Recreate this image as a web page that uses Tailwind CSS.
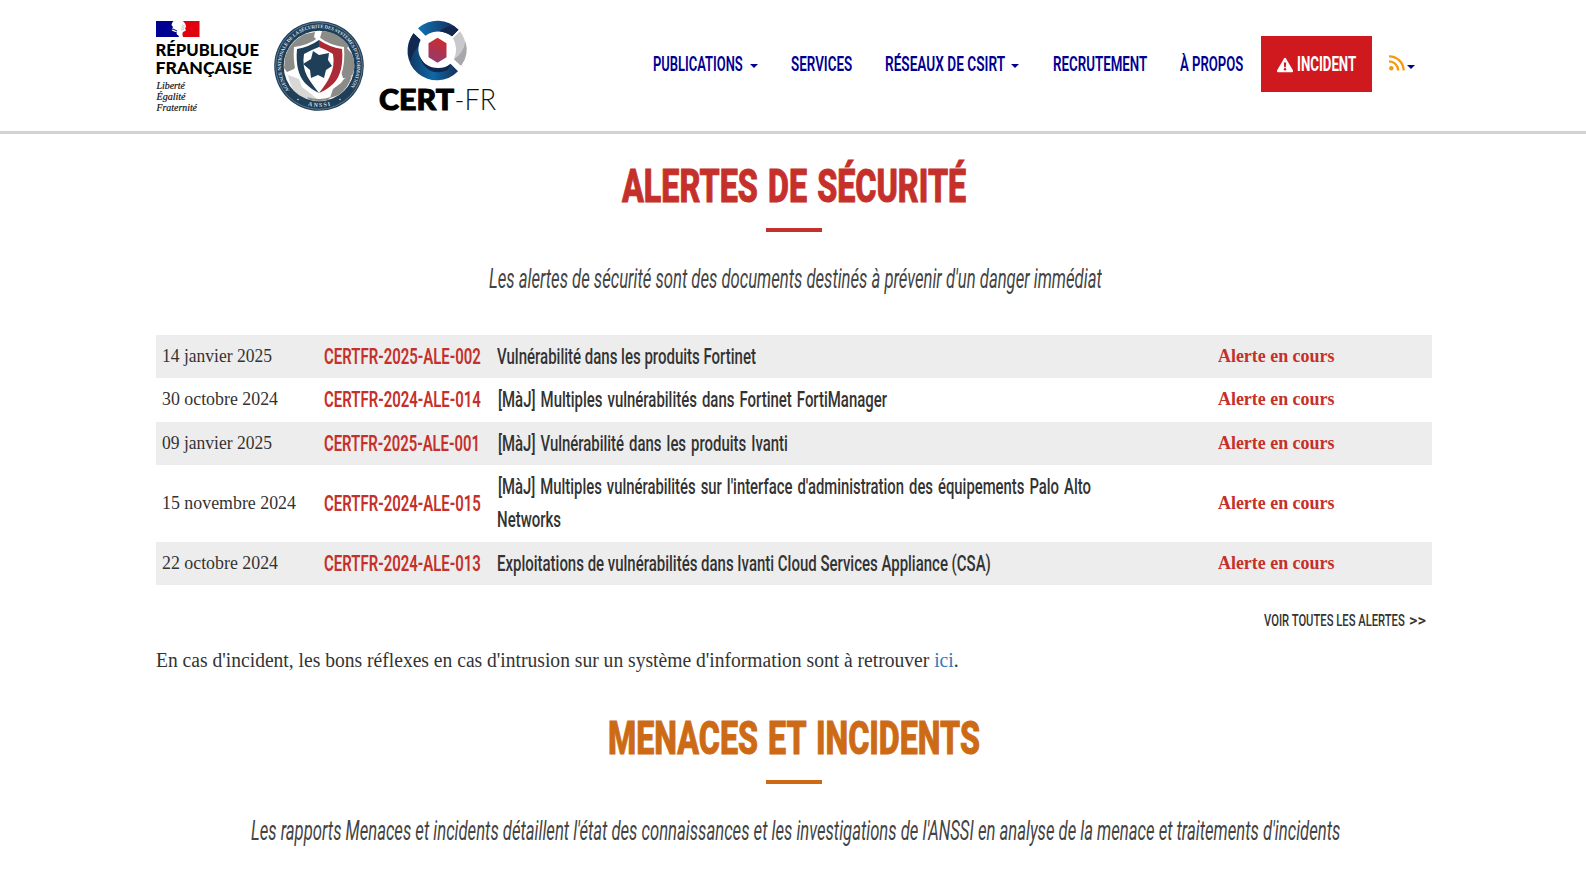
<!DOCTYPE html>
<html lang="fr">
<head>
<meta charset="utf-8">
<title>CERT-FR</title>
<script src="https://cdn.jsdelivr.net/npm/@tailwindcss/browser@4"></script>
</head>
<body class="h-[880px] overflow-hidden bg-white font-['Roboto','Liberation_Sans',sans-serif] text-[#333]">
<header class="flex h-[134px] items-start border-b-[3px] border-[#d2d2d2] pl-[156px]">
  <svg class="mt-5 h-[94px] w-[106px] shrink-0 overflow-visible" viewBox="156 20 106 94" aria-label="République Française">
    <path fill="#000091" d="M156 21h17.500q-2 2-2 4l1.500 2-1.500 3 1 1 3 1 3 5H156z"/>
    <path fill="#e1000f" d="M199.500 21v16H183q-1.500-3 0-5l2-1 1-1-1-1.500 1-1.500q-.5-4-3-6z"/>
    <path fill="none" stroke="#000091" stroke-width="1" d="M168 31.500l5-2.500 4 2M166 34l6-2 5 1M170 36l5-2 4 2.500"/>
    <path fill="#ddd" d="M182 24l3 2-1 4-3 1z"/>
    <g font-family="Lato" font-weight="900" font-size="16" fill="#000">
      <text x="155.500" y="55.800" textLength="103.500" lengthAdjust="spacingAndGlyphs">RÉPUBLIQUE</text>
      <text x="155.500" y="73.700" textLength="96.500" lengthAdjust="spacingAndGlyphs">FRANÇAISE</text>
    </g>
    <g font-family="Liberation Serif" font-style="italic" font-size="10.500" fill="#111" stroke="#111" stroke-width=".2">
      <text x="156.500" y="89" textLength="28.500" lengthAdjust="spacingAndGlyphs">Liberté</text>
      <text x="156.500" y="100" textLength="29" lengthAdjust="spacingAndGlyphs">Égalité</text>
      <text x="156.500" y="111" textLength="40.500" lengthAdjust="spacingAndGlyphs">Fraternité</text>
    </g>
  </svg>
  <svg class="ml-[11px] mt-5 h-[92px] w-[92px] shrink-0 overflow-visible" viewBox="-46 -46 92 92" aria-label="ANSSI">
    <circle r="44.800" fill="#1f3f58"/><circle r="43.300" fill="none" stroke="#9fb0bc" stroke-width=".5"/>
    <circle r="35.300" fill="#fff"/>
    <g fill="#8b8b87">
      <path d="M-34-8Q-30-24-14-32L-4-34-5-29-1-25-9-23-12-16-20-9-22-2-25 3-32 6-35 2z"/>
      <path d="M3-35Q20-34 30-20L28-18 33-12Q37-2 34 8L29 13 24 12 20 0 16-12 10-19 4-22 1-28z"/>
      <path d="M25 13l8-3q-4 12-13 19L11 32l3-9 8-6z"/>
      <path d="M-31 9l11 4 3 8 8 6 7 6Q-14 35-24 26q-5-6-7-17z" opacity=".35"/>
      <path d="M-12 31q12 4 24 0l-3 3q-9 2-18 0z"/>
    </g>
    <path fill="#fff" d="M0-29Q-10-21-25-19-27 8-15 20-8 28 0 31 8 28 15 20 27 8 25-19 10-21 0-29z"/>
    <path fill="#1f3f58" d="M0-26Q-10-19-22-17-24 6-14 17-7 24 0 27-8 17-12 10-17 0-15-12-8-16 0-19z"/>
    <path fill="#ab2a36" d="M0-26Q10-19 23-17 25 6 15 17 8 24 0 27 8 17 11 10 16 0 14-12 8-16 0-19z"/>
    <path fill="#1f3f58" d="M-6-15L0-11 10-13 9-6 13 0 7 4 5 12-1 9-8 12-9 4-16-2-8-7z"/>
    <path id="seal-top" d="M-28.800 24.800A38 38 0 1 1 28.800 24.800" fill="none"/>
    <path id="seal-low" d="M-14 38.500A41 41 0 0 0 14 38.500" fill="none"/>
    <g font-family="Liberation Serif" font-weight="700" fill="#d5dde2">
      <text font-size="5"><textPath href="#seal-top" textLength="167" startOffset="1">AGENCE NATIONALE DE LA SÉCURITÉ DES SYSTÈMES D'INFORMATION</textPath></text>
      <text font-size="6"><textPath href="#seal-low" textLength="23" startOffset="3">ANSSI</textPath></text>
    </g>
    <circle cx="-21" cy="33.500" r=".7" fill="#fff"/><circle cx="21" cy="33.500" r=".7" fill="#fff"/>
  </svg>
  <svg class="ml-3 mt-5 h-[94px] w-[123px] shrink-0 overflow-visible" viewBox="377 20 123 94" aria-label="CERT-FR">
    <defs>
      <linearGradient id="arc-up"><stop offset="0" stop-color="#1272b4"/><stop offset="1" stop-color="#12284f"/></linearGradient>
      <linearGradient id="arc-down"><stop offset="0" stop-color="#12355f"/><stop offset=".5" stop-color="#0f68a5"/><stop offset="1" stop-color="#17305a"/></linearGradient>
      <linearGradient id="core" x1=".6" y1="0" x2=".3" y2="1"><stop offset="0" stop-color="#cd2b2d"/><stop offset="1" stop-color="#903c72"/></linearGradient>
    </defs>
    <g transform="translate(437.500 50.200)">
      <path fill="url(#arc-up)" d="M-19.500-22A29.300 29.300 0 0 1 21-20.500L14.500-14Q1-23-12-14.500z"/>
      <path fill="#12284f" d="M2-19Q13-27 19-22L21-20.500 14.500-14Q9-18 2-19z"/>
      <path fill="#c9c9cb" d="M22.500-19A29.300 29.300 0 0 1 23.500 15.500L16.500 9Q21-2 15.500-12z"/>
      <path fill="#a7a8ab" d="M28-9Q32 5 23.500 15.500L16.500 9Q26 3 28-9z"/>
      <path fill="url(#arc-down)" d="M-24-17A29.300 29.300 0 0 0 20.500 21L13 13.500Q1 23-12 14.500-23 3-17-10z"/>
      <path fill="#12284f" d="M-24-17A29.300 29.300 0 0 0-27 11Q-24 0-19.500-3-19-8-17-10.500z"/>
      <path fill="#12284f" d="M-19 4Q-11 28 10 20L13.500 14 8 17Q-12 21-19 4z"/>
      <path fill="url(#core)" d="M0-12.500L9-7V7L0 12.500-9 7V-7z"/>
    </g>
    <text x="379" y="110.400" font-family="Lato" font-weight="900" font-size="28.500" fill="#000" textLength="75" lengthAdjust="spacingAndGlyphs" stroke="#000" stroke-width="1">CERT</text>
    <text x="454.500" y="110.400" font-family="Lato" font-weight="300" font-size="28.500" fill="#111" textLength="41.500" lengthAdjust="spacingAndGlyphs">-FR</text>
  </svg>
  <nav class="ml-[153px] mt-9 flex h-[56px] items-center text-[20px] font-semibold leading-6 text-[#000091]">
    <a class="w-[90px]"><span class="fit inline-block origin-left whitespace-nowrap">PUBLICATIONS</span></a>
    <i class="ml-[7px] mt-[3px] border-x-4 border-t-4 border-x-transparent border-t-[#000091]"></i>
    <a class="ml-[33px] w-[61px]"><span class="fit inline-block origin-left whitespace-nowrap">SERVICES</span></a>
    <a class="ml-[33px] w-[120px]"><span class="fit inline-block origin-left whitespace-nowrap">RÉSEAUX DE CSIRT</span></a>
    <i class="ml-[6px] mt-[3px] border-x-4 border-t-4 border-x-transparent border-t-[#000091]"></i>
    <a class="ml-[34px] w-[94px]"><span class="fit inline-block origin-left whitespace-nowrap">RECRUTEMENT</span></a>
    <a class="ml-[33px] w-[63px]"><span class="fit inline-block origin-left whitespace-nowrap">À PROPOS</span></a>
    <a class="ml-[18px] flex h-[56px] w-[111px] items-center bg-[#d0191f] pl-4 text-white">
      <svg class="mt-px h-4 w-4" viewBox="0 0 16 16"><path fill="#fff" d="M7 1.600q1-1.600 2 0l7 12q.6 1.600-1 1.600H1q-1.600 0-1-1.600z"/><path fill="#d0191f" d="M6.800 5.500h2.400L8.800 10.300H7.200z"/><circle cx="8" cy="12.300" r="1.200" fill="#d0191f"/></svg>
      <span class="ml-1 w-[59px]"><span class="fit inline-block origin-left whitespace-nowrap font-bold">INCIDENT</span></span>
    </a>
    <svg class="-mt-[3px] ml-[17px] h-4 w-4" viewBox="0 0 16 16" fill="none" stroke="#f7990c" stroke-width="2.300"><circle cx="2.300" cy="13.300" r="2.200" fill="#f7990c" stroke="none"/><path d="M0 6.300a9.200 9.200 0 0 1 9.200 9.200M0 1.300a14.500 14.500 0 0 1 14.700 14.200"/></svg>
    <i class="ml-[2px] mt-[5px] border-x-4 border-t-4 border-x-transparent border-t-[#000091]"></i>
  </nav>
</header>
<main class="flex flex-col overflow-x-clip pl-[156px] pr-[154px] pt-[27px]">
  <h2 class="w-[344px] self-center text-[46px] font-extrabold leading-[50px] text-[#c5302b] [word-spacing:3px] [-webkit-text-stroke:1px]"><span class="fit inline-block origin-left whitespace-nowrap">ALERTES DE SÉCURITÉ</span></h2>
  <div class="mt-[17px] h-1 w-14 self-center bg-[#c5302b]"></div>
  <p class="ml-[333px] mt-[33px] w-[613px] text-[27px] italic leading-[29px] text-[#444]"><span class="fit inline-block origin-left whitespace-nowrap">Les alertes de sécurité sont des documents destinés à prévenir d'un danger immédiat</span></p>

  <section class="mt-[41px] text-[22px] font-medium leading-[32.500px]">
    <div class="flex h-[43px] items-center bg-[#ededed] pl-[6px]">
      <div class="w-[162px] pb-px font-['Liberation_Serif',serif] text-[18px] font-normal"><span class="block w-[110px]"><span class="fit inline-block origin-left whitespace-nowrap">14 janvier 2025</span></span></div>
      <div class="w-[173px] pt-px font-semibold text-[#c5302b]"><span class="block w-[157px]"><span class="fit inline-block origin-left whitespace-nowrap">CERTFR-2025-ALE-002</span></span></div>
      <div class="w-[721px] pt-px"><span class="block w-[259px]"><span class="fit inline-block origin-left whitespace-nowrap">Vulnérabilité dans les produits Fortinet</span></span></div>
      <div class="w-[116px] pb-px font-['Liberation_Serif',serif] text-[19px] font-bold text-[#c5302b]"><span class="fit inline-block origin-left whitespace-nowrap">Alerte en cours</span></div>
    </div>
    <div class="flex h-11 items-center pl-[6px]">
      <div class="w-[162px] pb-px font-['Liberation_Serif',serif] text-[18px] font-normal"><span class="block w-[116px]"><span class="fit inline-block origin-left whitespace-nowrap">30 octobre 2024</span></span></div>
      <div class="w-[173px] font-semibold text-[#c5302b]"><span class="block w-[157px]"><span class="fit inline-block origin-left whitespace-nowrap">CERTFR-2024-ALE-014</span></span></div>
      <div class="w-[721px] [word-spacing:2px]"><span class="ml-px block w-[389px]"><span class="fit inline-block origin-left whitespace-nowrap">[MàJ] Multiples vulnérabilités dans Fortinet FortiManager</span></span></div>
      <div class="w-[116px] pb-px font-['Liberation_Serif',serif] text-[19px] font-bold text-[#c5302b]"><span class="fit inline-block origin-left whitespace-nowrap">Alerte en cours</span></div>
    </div>
    <div class="flex h-[43px] items-center bg-[#ededed] pl-[6px]">
      <div class="w-[162px] pb-px font-['Liberation_Serif',serif] text-[18px] font-normal"><span class="block w-[110px]"><span class="fit inline-block origin-left whitespace-nowrap">09 janvier 2025</span></span></div>
      <div class="w-[173px] pt-px font-semibold text-[#c5302b]"><span class="block w-[156px]"><span class="fit inline-block origin-left whitespace-nowrap">CERTFR-2025-ALE-001</span></span></div>
      <div class="w-[721px] pt-px [word-spacing:2px]"><span class="ml-px block w-[290px]"><span class="fit inline-block origin-left whitespace-nowrap">[MàJ] Vulnérabilité dans les produits Ivanti</span></span></div>
      <div class="w-[116px] pb-px font-['Liberation_Serif',serif] text-[19px] font-bold text-[#c5302b]"><span class="fit inline-block origin-left whitespace-nowrap">Alerte en cours</span></div>
    </div>
    <div class="flex h-[77px] items-center pl-[6px]">
      <div class="w-[162px] pb-px font-['Liberation_Serif',serif] text-[18px] font-normal"><span class="block w-[134px]"><span class="fit inline-block origin-left whitespace-nowrap">15 novembre 2024</span></span></div>
      <div class="w-[173px] pt-px font-semibold text-[#c5302b]"><span class="block w-[157px]"><span class="fit inline-block origin-left whitespace-nowrap">CERTFR-2024-ALE-015</span></span></div>
      <div class="w-[721px] [word-spacing:2px]"><span class="ml-px block w-[593px]"><span class="fit inline-block origin-left whitespace-nowrap">[MàJ] Multiples vulnérabilités sur l'interface d'administration des équipements Palo Alto</span></span><span class="block w-[64px]"><span class="fit inline-block origin-left whitespace-nowrap">Networks</span></span></div>
      <div class="w-[116px] pb-px font-['Liberation_Serif',serif] text-[19px] font-bold text-[#c5302b]"><span class="fit inline-block origin-left whitespace-nowrap">Alerte en cours</span></div>
    </div>
    <div class="flex h-[43px] items-center bg-[#ededed] pl-[6px]">
      <div class="w-[162px] pb-px font-['Liberation_Serif',serif] text-[18px] font-normal"><span class="block w-[116px]"><span class="fit inline-block origin-left whitespace-nowrap">22 octobre 2024</span></span></div>
      <div class="w-[173px] pt-px font-semibold text-[#c5302b]"><span class="block w-[157px]"><span class="fit inline-block origin-left whitespace-nowrap">CERTFR-2024-ALE-013</span></span></div>
      <div class="w-[721px] pt-px"><span class="block w-[494px]"><span class="fit inline-block origin-left whitespace-nowrap">Exploitations de vulnérabilités dans Ivanti Cloud Services Appliance (CSA)</span></span></div>
      <div class="w-[116px] pb-px font-['Liberation_Serif',serif] text-[19px] font-bold text-[#c5302b]"><span class="fit inline-block origin-left whitespace-nowrap">Alerte en cours</span></div>
    </div>
  </section>

  <a class="mr-[6px] mt-[23px] flex w-[162px] self-end text-[17.300px] font-medium leading-6"><span class="w-[141px]"><span class="fit inline-block origin-left whitespace-nowrap">VOIR TOUTES LES ALERTES</span></span><span class="ml-1 w-[17px]"><span class="fit inline-block origin-left whitespace-nowrap">&gt;&gt;</span></span></a>
  <p class="mt-[14px] w-[803px] font-['Liberation_Serif',serif] text-[20px] leading-7"><span class="fit inline-block origin-left whitespace-nowrap">En cas d'incident, les bons réflexes en cas d'intrusion sur un système d'information sont à retrouver <a class="text-[#337ab7]">ici</a>.</span></p>

  <h2 class="mt-[39px] w-[372px] self-center text-[46px] font-extrabold leading-[50px] text-[#cc6a16] [word-spacing:3px] [-webkit-text-stroke:1px]"><span class="fit inline-block origin-left whitespace-nowrap">MENACES ET INCIDENTS</span></h2>
  <div class="mt-[17px] h-1 w-14 self-center bg-[#cc6a16]"></div>
  <p class="ml-[95px] mt-[33px] w-[1089px] text-[27px] italic leading-[29px] text-[#444]"><span class="fit inline-block origin-left whitespace-nowrap">Les rapports Menaces et incidents détaillent l'état des connaissances et les investigations de l'ANSSI en analyse de la menace et traitements d'incidents</span></p>
</main>
<script>
  // Condense each label to the width of its column, again whenever either size changes.
  const labels = document.querySelectorAll('.fit');
  function condense() {
    labels.forEach(function (el) {
      const room = el.parentElement.clientWidth;
      if (room && el.offsetWidth) el.style.transform = 'scaleX(' + room / el.offsetWidth + ')';
    });
  }
  const watcher = new ResizeObserver(condense);
  labels.forEach(function (el) { watcher.observe(el); watcher.observe(el.parentElement); });
  window.addEventListener('load', condense);
  condense();
</script>
</body>
</html>
